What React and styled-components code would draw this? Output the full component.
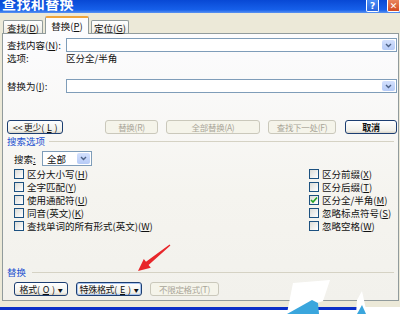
import React from 'react';
import styled, { createGlobalStyle } from 'styled-components';

const Global = createGlobalStyle`
  html, body { margin: 0; padding: 0; background: #fff; }
  body { font-family: "Noto Sans CJK SC", "Noto Sans", sans-serif; }
`;

const Window = styled.div`
  position: relative;
  width: 400px;
  height: 314px;
  overflow: hidden;
  background: #fff;
  display: flex;
  flex-direction: column;
  font-size: 9.5px;
  color: #111;
`;

const TitleBar = styled.div`
  height: 13px;
  flex: none;
  display: flex;
  align-items: flex-start;
  background: linear-gradient(#0848d4, #1660ea 75%, #5b93f2);
  overflow: hidden;
`;

const Title = styled.div`
  font-size: 14px;
  font-weight: bold;
  color: #fff;
  line-height: 16px;
  margin-top: -5px;
  padding-left: 2px;
  letter-spacing: 0.4px;
`;

const CaptionButton = styled.div`
  box-sizing: border-box;
  width: 13px;
  height: 12px;
  margin-left: ${p => p.$gap};
  border: 1px solid #fff;
  border-top: none;
  border-radius: 0 0 2px 2px;
  background: ${p => (p.$close ? 'linear-gradient(#e8855f, #d34a22)' : 'linear-gradient(#4a8ff6, #2b66de)')};
  color: #fff;
  font: bold 9px "DejaVu Sans", sans-serif;
  display: flex;
  align-items: center;
  justify-content: center;
  flex: none;
`;

const Frame = styled.div`
  background: #ece9d8;
  padding: 0 1px 6px 2px;
  display: flex;
  flex-direction: column;
`;

const TabStrip = styled.div`
  position: relative;
  z-index: 1;
  height: 21px;
  margin-bottom: -1px;
  padding-left: 1px;
  display: flex;
  align-items: flex-end;
`;

const Tab = styled.div`
  box-sizing: border-box;
  width: ${p => p.$w}px;
  height: ${p => (p.$active ? 18 : 13)}px;
  margin: 0 2px ${p => (p.$active ? 0 : 1)}px 0;
  border: 1px solid #919b9c;
  border-bottom: none;
  border-top: ${p => (p.$active ? '2px solid #f0a53a' : '1px solid #919b9c')};
  border-radius: 2px 2px 0 0;
  background: ${p => (p.$active ? '#fcfcfe' : 'linear-gradient(#fff, #ecebe5)')};
  display: flex;
  align-items: center;
  justify-content: center;
  font-size: 9.5px;
  padding-top: ${p => (p.$active ? 0 : 1)}px;
`;

const Page = styled.div`
  box-sizing: border-box;
  height: 268px;
  border: 1px solid #919b9c;
  background: linear-gradient(#fcfcfe, #f5f4ef 60%, #f2f1ec);
  padding: 4px 1px 0 4px;
  display: flex;
  flex-direction: column;
`;

const FieldRow = styled.div`
  display: flex;
  align-items: center;
  height: ${p => p.$h || 14}px;
  margin-top: ${p => p.$mt || 0}px;
  flex: none;
`;

const Label = styled.div`
  width: 59px;
  flex: none;
  white-space: nowrap;
`;

const Key = styled.span`
  text-decoration: underline;
`;

const Combo = styled.div`
  box-sizing: border-box;
  flex: ${p => (p.$w ? 'none' : 1)};
  width: ${p => (p.$w ? `${p.$w}px` : 'auto')};
  height: 100%;
  border: 1px solid #7f9db9;
  background: #fff;
  padding: 1px;
  display: flex;
  align-items: stretch;
`;

const ComboText = styled.div`
  flex: 1;
  display: flex;
  align-items: center;
  padding-left: 3px;
`;

const DropButton = styled.div`
  width: 13px;
  border-radius: 2px;
  background: linear-gradient(#d3e0fd, #b6cbf7);
  display: flex;
  align-items: center;
  justify-content: center;
`;

const Button = styled.div`
  box-sizing: border-box;
  width: ${p => p.$w}px;
  height: 14px;
  margin-left: ${p => p.$ml || 0}px;
  flex: none;
  border: 1px solid ${p => (p.$disabled ? '#cac8bb' : '#1c3e71')};
  border-radius: 3px;
  background: ${p => (p.$disabled ? '#f5f4ea' : 'linear-gradient(#fff, #f1f0ea 80%, #d8d3c7)')};
  color: ${p => (p.$disabled ? '#a9a598' : '#111')};
  box-shadow: ${p => (p.$focus ? 'inset 0 0 0 1px #a8c4f0' : 'none')};
  font-size: ${p => (p.$disabled ? 8.5 : 9)}px;
  font-weight: ${p => (p.$bold ? 'bold' : 'normal')};
  letter-spacing: -0.3px;
  display: flex;
  align-items: center;
  justify-content: center;
  gap: 3px;
  white-space: nowrap;
  overflow: hidden;
`;

const Caret = styled.span`
  font-size: 5px;
`;

const SectionHead = styled.div`
  display: flex;
  align-items: center;
  height: 12px;
  margin-top: ${p => p.$mt}px;
  padding-right: 3px;
  color: #1a4fd0;
  flex: none;
`;

const Rule = styled.div`
  flex: 1;
  height: 1px;
  margin-left: ${p => p.$ml}px;
  background: #d5d2c4;
`;

const SearchRow = styled.div`
  display: flex;
  align-items: center;
  height: 15px;
  margin-top: 4px;
  padding-left: 7px;
  flex: none;
`;

const SearchLabel = styled.div`
  width: 28px;
  flex: none;
`;

const CheckGrid = styled.div`
  display: grid;
  grid-template-columns: 295px 1fr;
  grid-auto-rows: 13px;
  margin-top: 1px;
  padding-left: 7px;
  flex: none;
`;

const CheckItem = styled.div`
  display: flex;
  align-items: center;
  gap: 3px;
  white-space: nowrap;
`;

const Box = styled.div`
  box-sizing: border-box;
  width: 10px;
  height: 10px;
  flex: none;
  border: 1px solid #1c5180;
  background: linear-gradient(135deg, #dcdcd7, #fff);
  display: flex;
  align-items: center;
  justify-content: center;
`;

const ButtonBar = styled.div`
  display: flex;
  margin-top: ${p => p.$mt || 4}px;
  padding-left: ${p => p.$pl || 0}px;
  flex: none;
`;

const Push = styled.div`
  margin-left: auto;
  display: flex;
`;

const BlueEdge = styled.div`
  width: 360px;
  height: 3px;
  background: #0a2fc8;
  flex: none;
`;

const Overlay = styled.svg`
  position: absolute;
  left: 0;
  top: 0;
  pointer-events: none;
`;

const Chevron = () => (
  <svg width="7" height="5" viewBox="0 0 7 5">
    <polyline points="1,1 3.5,3.5 6,1" fill="none" stroke="#4d6185" strokeWidth="1.4" />
  </svg>
);

const Tick = () => (
  <svg width="8" height="8" viewBox="0 0 8 8">
    <polyline points="1,4 3,6 7,1.5" fill="none" stroke="#21a121" strokeWidth="1.6" />
  </svg>
);

const Check = ({ label, k, checked }) => (
  <CheckItem>
    <Box>{checked && <Tick />}</Box>
    <span>
      {label}(<Key>{k}</Key>)
    </span>
  </CheckItem>
);

const leftChecks = [
  ['区分大小写', 'H'],
  ['全字匹配', 'Y'],
  ['使用通配符', 'U'],
  ['同音(英文)', 'K'],
  ['查找单词的所有形式(英文)', 'W'],
];

const rightChecks = [
  ['区分前缀', 'X'],
  ['区分后缀', 'T'],
  ['区分全/半角', 'M', true],
  ['忽略标点符号', 'S'],
  ['忽略空格', 'W'],
];

export default function App() {
  return (
    <>
      <Global />
      <Window>
        <TitleBar>
          <Title>查找和替换</Title>
          <CaptionButton $gap="auto">?</CaptionButton>
          <CaptionButton $gap="8px" $close>✕</CaptionButton>
        </TitleBar>

        <Frame>
          <TabStrip>
            <Tab $w={40}>查找(<Key>D</Key>)</Tab>
            <Tab $w={44} $active>替换(<Key>P</Key>)</Tab>
            <Tab $w={38}>定位(<Key>G</Key>)</Tab>
          </TabStrip>

          <Page>
            <FieldRow>
              <Label>查找内容(<Key>N</Key>):</Label>
              <Combo>
                <ComboText />
                <DropButton><Chevron /></DropButton>
              </Combo>
            </FieldRow>
            <FieldRow $h={12}>
              <Label>选项:</Label>
              <span>区分全/半角</span>
            </FieldRow>
            <FieldRow $mt={15}>
              <Label>替换为(<Key>I</Key>):</Label>
              <Combo>
                <ComboText />
                <DropButton><Chevron /></DropButton>
              </Combo>
            </FieldRow>

            <ButtonBar $mt={27}>
              <Button $w={56}>&lt;&lt; 更少(<Key>L</Key>)</Button>
              <Push>
                <Button $w={53} $disabled>替换(R)</Button>
                <Button $w={94} $ml={8} $disabled>全部替换(A)</Button>
                <Button $w={68} $ml={8} $disabled>查找下一处(F)</Button>
                <Button $w={52} $ml={9} $bold>取消</Button>
              </Push>
            </ButtonBar>

            <SectionHead $mt={1}>
              <span>搜索选项</span>
              <Rule $ml={4} />
            </SectionHead>

            <SearchRow>
              <SearchLabel>搜索<Key>:</Key></SearchLabel>
              <Combo $w={50}>
                <ComboText>全部</ComboText>
                <DropButton><Chevron /></DropButton>
              </Combo>
            </SearchRow>

            <CheckGrid>
              {leftChecks.map((l, i) => (
                <React.Fragment key={l[0]}>
                  <Check label={l[0]} k={l[1]} />
                  <Check label={rightChecks[i][0]} k={rightChecks[i][1]} checked={rightChecks[i][2]} />
                </React.Fragment>
              ))}
            </CheckGrid>

            <SectionHead $mt={34}>
              <span>替换</span>
              <Rule $ml={6} />
            </SectionHead>

            <ButtonBar $pl={7}>
              <Button $w={54}>格式(<Key>O</Key>)<Caret>▼</Caret></Button>
              <Button $w={66} $ml={8} $focus>特殊格式(<Key>E</Key>)<Caret>▼</Caret></Button>
              <Button $w={69} $ml={8} $disabled>不限定格式(T)</Button>
            </ButtonBar>
          </Page>
        </Frame>

        <BlueEdge />

        <Overlay width="400" height="314" viewBox="0 0 400 314">
          <polygon
            points="138,271 150.8,267.7 148.6,265 170.4,245.4 169.6,244.6 146,261.8 143.8,259.1"
            fill="#e8262a"
          />
          <polygon points="293,283 330,280 323,301 287,313" fill="#fff" />
          <polygon points="287,314 312,300 318,303 319,314" fill="#3aa6dd" />
          <polygon points="357,300 362,291 367,314 356,314" fill="#fff" />
          <polygon points="357,314 362,305 366,314" fill="#3aa6dd" />
        </Overlay>
      </Window>
    </>
  );
}
